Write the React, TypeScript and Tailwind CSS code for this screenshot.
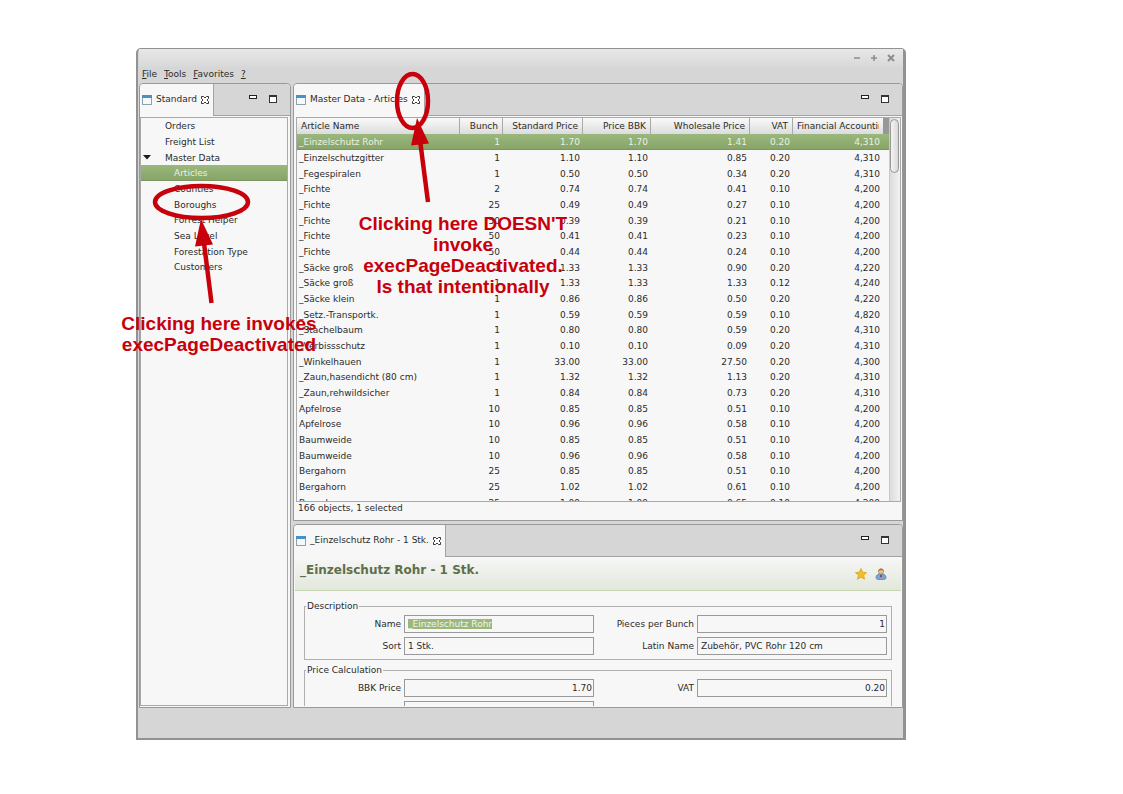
import React, { useEffect, useRef } from 'react';

interface Article {
    name: string;
    bunch: number;
    standard: string;
    bbk: string;
    wholesale: string;
    vat: string;
    account: string;
}

const row = (
    name: string,
    bunch: number,
    standard: string,
    wholesale: string,
    vat: string,
    account: string,
): Article => ({ name, bunch, standard, bbk: standard, wholesale, vat, account });

const articles: Article[] = [
    row('_Einzelschutz Rohr', 1, '1.70', '1.41', '0.20', '4,310'),
    row('_Einzelschutzgitter', 1, '1.10', '0.85', '0.20', '4,310'),
    row('_Fegespiralen', 1, '0.50', '0.34', '0.20', '4,310'),
    row('_Fichte', 2, '0.74', '0.41', '0.10', '4,200'),
    row('_Fichte', 25, '0.49', '0.27', '0.10', '4,200'),
    row('_Fichte', 50, '0.39', '0.21', '0.10', '4,200'),
    row('_Fichte', 50, '0.41', '0.23', '0.10', '4,200'),
    row('_Fichte', 50, '0.44', '0.24', '0.10', '4,200'),
    row('_Säcke groß', 1, '1.33', '0.90', '0.20', '4,220'),
    row('_Säcke groß', 1, '1.33', '1.33', '0.12', '4,240'),
    row('_Säcke klein', 1, '0.86', '0.50', '0.20', '4,220'),
    row('_Setz.-Transportk.', 1, '0.59', '0.59', '0.10', '4,820'),
    row('_Stachelbaum', 1, '0.80', '0.59', '0.20', '4,310'),
    row('_Verbissschutz', 1, '0.10', '0.09', '0.20', '4,310'),
    row('_Winkelhauen', 1, '33.00', '27.50', '0.20', '4,300'),
    row('_Zaun,hasendicht (80 cm)', 1, '1.32', '1.13', '0.20', '4,310'),
    row('_Zaun,rehwildsicher', 1, '0.84', '0.73', '0.20', '4,310'),
    row('Apfelrose', 10, '0.85', '0.51', '0.10', '4,200'),
    row('Apfelrose', 10, '0.96', '0.58', '0.10', '4,200'),
    row('Baumweide', 10, '0.85', '0.51', '0.10', '4,200'),
    row('Baumweide', 10, '0.96', '0.58', '0.10', '4,200'),
    row('Bergahorn', 25, '0.85', '0.51', '0.10', '4,200'),
    row('Bergahorn', 25, '1.02', '0.61', '0.10', '4,200'),
    row('Bergahorn', 25, '1.09', '0.65', '0.10', '4,200'),
];

const treeItems = [
    { label: 'Orders', level: 1 },
    { label: 'Freight List', level: 1 },
    { label: 'Master Data', level: 1, open: true },
    { label: 'Articles', level: 2, selected: true },
    { label: 'Counties', level: 2 },
    { label: 'Boroughs', level: 2 },
    { label: 'Forrest Helper', level: 2 },
    { label: 'Sea Level', level: 2 },
    { label: 'Forestation Type', level: 2 },
    { label: 'Customers', level: 2 },
];

const selectedBg = 'bg-linear-to-b from-[#9ab77d] to-[#86a466] shadow-[inset_0_-1px_0_#7b9460] text-[#e9f0e2]';

const WindowIcon = () => (
    <svg width="10" height="10" viewBox="0 0 10 10" className="shrink-0">
        <rect x="0.5" y="0.5" width="9" height="9" fill="#f4f8fa" stroke="#8fa0ad" />
        <rect x="0" y="0" width="10" height="3" fill="#4a90c8" />
    </svg>
);

const CloseIcon = () => (
    <svg width="8" height="8" viewBox="0 0 8 8" fill="#fff" stroke="#222" strokeWidth="0.9">
        <path d="M0.5 0.5h2L4 2l1.5-1.5h2v2L6 4l1.5 1.5v2h-2L4 6 2.5 7.5h-2v-2L2 4 0.5 2.5z" />
    </svg>
);

const PanelHeader: React.FC<{ title: string }> = ({ title }) => (
    <div className="flex h-8 shrink-0">
        <div className="flex items-center gap-1 rounded-tl-sm border-r border-[#a3a3a3] bg-[#f7f7f7] pl-[2px] pr-1">
            <WindowIcon />
            <button className="whitespace-nowrap">{title}</button>
            <button aria-label="Close">
                <CloseIcon />
            </button>
        </div>
        <div className="flex flex-1 justify-end gap-3 rounded-tr-sm border-b border-[#a3a3a3] bg-[#d6d6d6] pr-[13px] pt-[11px]">
            <button aria-label="Minimize" className="h-[4px] w-[8px] border border-[#222] bg-white" />
            <button aria-label="Maximize" className="h-[8px] w-[8px] border border-t-2 border-[#333] bg-white" />
        </div>
    </div>
);

const NavigationTree = () => (
    <ul className="mr-[2px] mt-px mb-px flex-1 border border-[#a9a9a9] bg-[#f7f7f7]">
        {treeItems.map((item) => (
            <li
                key={item.label}
                className={`flex h-4 items-center leading-3 nth-[3n]:h-[15px] ${item.level === 1 ? 'pl-6' : 'pl-[33px]'} ${item.selected ? selectedBg : ''}`}
            >
                {item.open && (
                    <svg width="8" height="5" viewBox="0 0 8 5" className="-ml-[22px] mr-[14px]">
                        <path d="M0 0h8L4 4.5z" fill="#1c1c1c" />
                    </svg>
                )}
                <button>{item.label}</button>
            </li>
        ))}
    </ul>
);

const HeadCell: React.FC<{ label: string; width: string }> = ({ label, width }) => (
    <th className={`${width} border-r border-[#a9a9a9] p-0 pr-1 text-right font-normal`}>{label}</th>
);

const ArticleTable = () => (
    <div className="ml-[2px] mr-px mt-px flex min-h-0 flex-1 overflow-hidden border border-[#a9a9a9]">
        <div className="min-w-0 flex-1 overflow-hidden">
            <table className="w-full table-fixed border-separate border-spacing-0 leading-3">
                <thead>
                    <tr className="h-4 bg-linear-to-b from-[#fafafa] to-[#dcdcdc]">
                        <th className="border-r border-[#a9a9a9] p-0 pl-1 text-left font-normal">Article Name</th>
                        <HeadCell label="Bunch" width="w-[43px]" />
                        <HeadCell label="Standard Price" width="w-[80px]" />
                        <HeadCell label="Price BBK" width="w-[68px]" />
                        <HeadCell label="Wholesale Price" width="w-[99px]" />
                        <HeadCell label="VAT" width="w-[43px]" />
                        <th className="w-[96px] border-r-[6px] border-[#979797] p-0 pl-1 pr-1 text-left font-normal">
                            <div className="overflow-hidden whitespace-nowrap">Financial Accounting</div>
                        </th>
                    </tr>
                </thead>
                <tbody>
                    {articles.map((a, i) => (
                        <tr key={i} className={`h-4 nth-[3n]:h-[15px] ${i === 0 ? selectedBg : ''}`}>
                            <td className="whitespace-nowrap p-0 pl-[2px]">{a.name}</td>
                            <td className="p-0 pr-[3px] text-right">{a.bunch}</td>
                            <td className="p-0 pr-[3px] text-right">{a.standard}</td>
                            <td className="p-0 pr-[3px] text-right">{a.bbk}</td>
                            <td className="p-0 pr-[3px] text-right">{a.wholesale}</td>
                            <td className="p-0 pr-[3px] text-right">{a.vat}</td>
                            <td className="p-0 pr-[9px] text-right">{a.account}</td>
                        </tr>
                    ))}
                </tbody>
            </table>
        </div>
        <div className="w-[11px] border-l border-[#c9c9c9] bg-linear-to-r from-[#dcdcdc] to-[#f2f2f2] pt-px">
            <div className="h-[54px] w-[9px] rounded-full border border-[#999] bg-linear-to-r from-[#f4f4f4] to-[#d8d8d8]" />
        </div>
    </div>
);

interface FieldProps {
    id: string;
    label: string;
    value: string;
    right?: boolean;
    inputRef?: React.Ref<HTMLInputElement>;
}

const Field: React.FC<FieldProps> = ({ id, label, value, right, inputRef }) => (
    <>
        <label htmlFor={id} className="pr-[3px] text-right leading-[18px]">
            {label}
        </label>
        <input
            id={id}
            ref={inputRef}
            defaultValue={value}
            className={`h-[18px] w-full min-w-0 border border-[#999] bg-[#f7f7f7] outline-none selection:bg-[#9ab87c] selection:text-[#f1f6ec] ${right ? 'pr-px text-right' : 'pl-[3px]'}`}
        />
    </>
);

const Group: React.FC<{ title: string; children: React.ReactNode }> = ({ title, children }) => (
    <fieldset className="min-w-0 border border-[#b0b0b0] pb-1">
        <legend className="ml-px px-px leading-3">{title}</legend>
        <div className="grid grid-cols-[99px_1fr_103px_1fr] gap-y-1 pr-1 pt-[3px]">{children}</div>
    </fieldset>
);

const StarIcon = () => (
    <svg width="12" height="12" viewBox="0 0 12 12">
        <path
            d="M6 0.6l1.6 3.6 3.9 0.4-2.9 2.6 0.9 4L6 9.2 2.500 11.2l0.9-4L0.500 4.6l3.9-0.4z"
            fill="#f2bf2c"
            stroke="#e0ab28"
            strokeWidth="1"
        />
    </svg>
);

const PersonIcon = () => (
    <svg width="12" height="12" viewBox="0 0 12 12">
        <path d="M1 9.800c0-2.600 1.600-4 5-4s5 1.400 5 4c0 1-1 1.700-2 1.700H3c-1 0-2-0.700-2-1.700z" fill="#7da3d3" stroke="#5b7ba6" strokeWidth="0.7" />
        <circle cx="6" cy="3.500" r="2.600" fill="#eac08c" stroke="#9a7440" strokeWidth="0.6" />
        <path d="M3.200 3.400c0-4 5.600-4 5.600 0C7.600 2 4.600 2 3.200 3.400z" fill="#a97a36" />
        <path d="M5.400 6.800h1.200l0.400 1.800L6 9.600l-1-1z" fill="#8d3348" />
    </svg>
);

const DetailPanel = () => {
    const nameRef = useRef<HTMLInputElement>(null);

    useEffect(() => {
        nameRef.current?.focus();
        nameRef.current?.select();
    }, []);

    return (
        <section className="flex h-[184px] shrink-0 flex-col overflow-hidden rounded-t-[4px] border border-[#999] bg-[#f7f7f7]">
            <PanelHeader title="_Einzelschutz Rohr - 1 Stk." />
            <div className="mx-px flex h-[34px] shrink-0 justify-between border-b border-[#c5d6b0] bg-linear-to-b from-[#f7f7f7] to-[#e2e8dc] pl-[5px] pr-[14px]">
                <h1 className="pt-[5px] text-[12px] leading-4 font-bold text-[#5d6f4b]">_Einzelschutz Rohr - 1 Stk.</h1>
                <div className="flex items-center gap-2">
                    <button aria-label="Favorite">
                        <StarIcon />
                    </button>
                    <button aria-label="Contact">
                        <PersonIcon />
                    </button>
                </div>
            </div>
            <div className="mb-px flex min-h-0 flex-1 flex-col gap-1 overflow-hidden px-[10px] pt-[9px]">
                <Group title="Description">
                    <Field id="name" label="Name" value="_Einzelschutz Rohr" inputRef={nameRef} />
                    <Field id="bunch" label="Pieces per Bunch" value="1" right />
                    <Field id="sort" label="Sort" value="1 Stk." />
                    <Field id="latin" label="Latin Name" value="Zubehör, PVC Rohr 120 cm" />
                </Group>
                <Group title="Price Calculation">
                    <Field id="bbk" label="BBK Price" value="1.70" right />
                    <Field id="vat" label="VAT" value="0.20" right />
                    <Field id="extra" label="" value="" />
                </Group>
            </div>
        </section>
    );
};

const MenuItem: React.FC<{ label: string }> = ({ label }) => (
    <button>
        <span className="underline">{label[0]}</span>
        {label.slice(1)}
    </button>
);

const Annotations = () => (
    <div className="pointer-events-none absolute left-0 top-0 font-['Liberation_Sans',Arial,sans-serif] text-[19px] leading-[21px] font-bold text-[#c7000b]">
        <svg width="600" height="320" viewBox="0 0 600 320" fill="none" stroke="#c7000b" strokeWidth="4.5">
            <ellipse cx="412.5" cy="101" rx="15.5" ry="27" />
            <path d="M428 202L420 140" />
            <path d="M417 118l12 25.500-18 2z" fill="#c7000b" stroke="none" />
            <ellipse cx="201.500" cy="202" rx="46.500" ry="16" />
            <path d="M211.500 303L204 243" />
            <path d="M201 219l12 25.500-18 2z" fill="#c7000b" stroke="none" />
        </svg>
        <p className="absolute left-[353px] top-[213px] w-[220px] text-center">
            Clicking here DOESN'T
            <br />
            invoke
            <br />
            execPageDeactivated.
            <br />
            Is that intentionally
        </p>
        <p className="absolute left-[109px] top-[313px] w-[220px] text-center">
            Clicking here invokes
            <br />
            execPageDeactivated
        </p>
    </div>
);

const App = () => (
    <div className="relative flex h-screen flex-col bg-white pt-12 pr-[217px] pb-[54px] pl-[136px] font-['DejaVu_Sans',sans-serif] text-[9px] text-[#2b2b2b]">
        <main className="flex min-h-0 flex-1 flex-col rounded-t-[5px] border-t border-r-[3px] border-b-2 border-l-2 border-[#929292] bg-[#d6d6d6] pl-px">
            <div className="flex h-[18px] shrink-0 items-center justify-end gap-[9px] bg-linear-to-b from-[#e8e8e8] to-[#d8d8d8] pr-2 text-[#8c8c8c]">
                <button aria-label="Minimize window">
                    <svg width="8" height="8" stroke="currentColor" strokeWidth="1.500">
                        <path d="M1 4h6" />
                    </svg>
                </button>
                <button aria-label="Maximize window">
                    <svg width="8" height="8" stroke="currentColor" strokeWidth="1.500">
                        <path d="M1 4h6M4 1v6" />
                    </svg>
                </button>
                <button aria-label="Close window">
                    <svg width="8" height="8" stroke="currentColor" strokeWidth="2">
                        <path d="M1 1l6 6M7 1L1 7" />
                    </svg>
                </button>
            </div>
            <nav className="flex h-4 shrink-0 items-center gap-[7px] pl-[3px]">
                <MenuItem label="File" />
                <MenuItem label="Tools" />
                <MenuItem label="Favorites" />
                <MenuItem label="?" />
            </nav>
            <div className="flex min-h-0 flex-1 gap-[2px]">
                <aside className="flex w-[152px] shrink-0 flex-col rounded-t-[4px] border border-[#999] bg-[#f7f7f7]">
                    <PanelHeader title="Standard" />
                    <NavigationTree />
                </aside>
                <div className="flex min-w-0 flex-1 flex-col gap-[3px]">
                    <section className="flex min-h-0 flex-1 flex-col rounded-t-[4px] border border-[#999] bg-[#f7f7f7]">
                        <PanelHeader title="Master Data - Articles" />
                        <ArticleTable />
                        <p className="h-[18px] shrink-0 pl-1 leading-3">166 objects, 1 selected</p>
                    </section>
                    <DetailPanel />
                </div>
            </div>
            <footer className="h-[30px] shrink-0" />
        </main>
        <Annotations />
    </div>
);

export default App;
